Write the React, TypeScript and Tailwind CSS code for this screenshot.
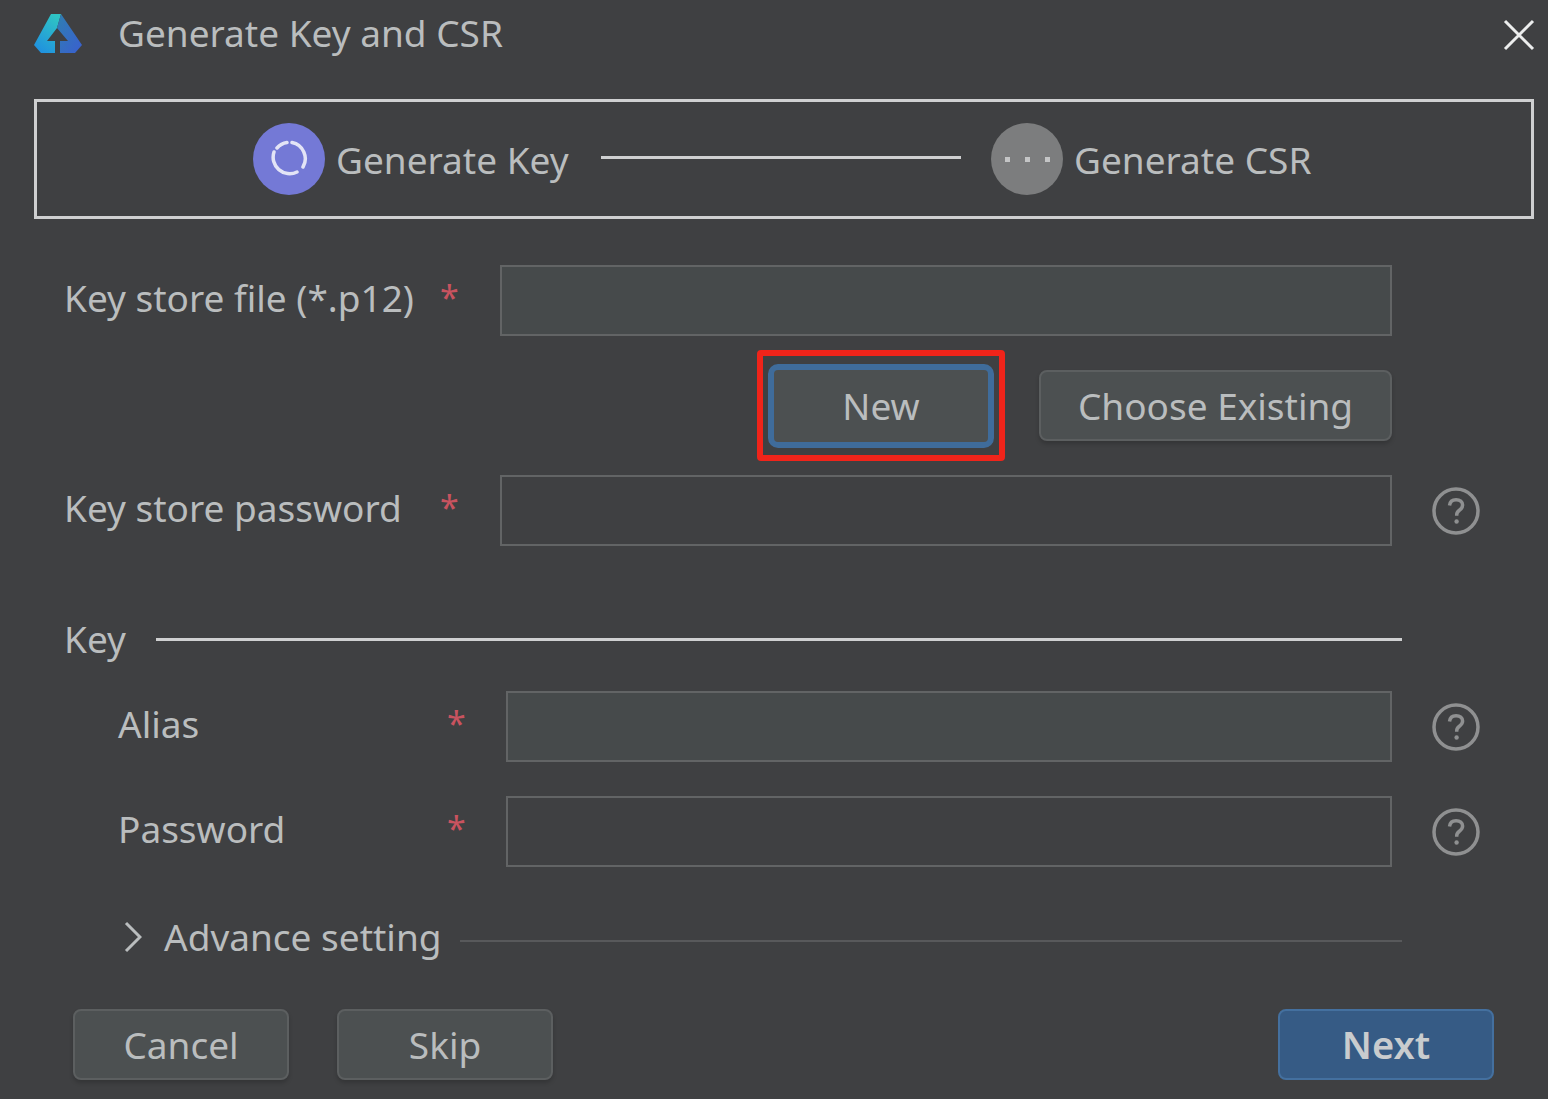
import React from 'react';

const font = "font-['Noto_Sans','Open_Sans',sans-serif]";

const Logo = () => (
  <svg width="50" height="41" viewBox="0 0 50 41" className="block">
    <defs>
      <linearGradient id="logoLeft" x1="0.2" y1="1" x2="0.7" y2="0">
        <stop offset="0" stopColor="#1f8fe0" />
        <stop offset="1" stopColor="#2fc4c4" />
      </linearGradient>
      <linearGradient id="logoRight" x1="0" y1="0" x2="1" y2="1">
        <stop offset="0" stopColor="#2f7fb0" />
        <stop offset="1" stopColor="#3a5fd0" />
      </linearGradient>
    </defs>
    <path d="M18 1 H28 L24 15 L14 28 H22 V40 H8 L1 32 Z" fill="url(#logoLeft)" />
    <path d="M28 1 L49 32 L42 40 H27 V28 H35 L24 15 Z" fill="url(#logoRight)" />
  </svg>
);

const HelpIcon = () => (
  <svg width="48" height="48" viewBox="0 0 48 48" fill="none" className="shrink-0">
    <circle cx="24" cy="24" r="22" stroke="#8f9091" strokeWidth="3.5" />
    <path d="M17.5 18.5c.4-3.6 3-5.8 6.6-5.8 3.8 0 6.5 2.2 6.5 5.4 0 2.4-1.2 3.7-3.2 5.1-1.9 1.3-2.7 2.4-2.7 4.6v1" stroke="#8f9091" strokeWidth="3.5" />
    <circle cx="24.6" cy="34.5" r="2.2" fill="#8f9091" />
  </svg>
);

const Required = () => (
  <span className="block h-[34px] text-[34px] leading-none text-[#c9535f]">*</span>
);

const Field = ({ filled }: { filled?: boolean }) => (
  <div className={`h-[71px] flex-1 border-2 border-[#626465] ${filled ? 'bg-[#464a4b]' : 'bg-[#3f4042]'}`} />
);

const Button = ({ label, className }: { label: string; className: string }) => (
  <button className={`flex h-[71px] items-center justify-center rounded-[8px] border-2 border-[#5c5f60] bg-[#4c5051] text-[#babdbe] shadow-[0_3px_4px_rgba(0,0,0,0.18)] ${className}`}>
    {label}
  </button>
);

const Row = ({ label, labelWidth, starWidth, filled, help }: { label: string; labelWidth: string; starWidth: string; filled?: boolean; help?: boolean }) => (
  <div className="flex items-center">
    <label className={`pb-[5px] ${labelWidth}`}>{label}</label>
    <div className={`self-start pt-[15px] ${starWidth}`}><Required /></div>
    <Field filled={filled} />
    <div className="flex w-[88px] justify-end">{help && <HelpIcon />}</div>
  </div>
);

export default function App() {
  return (
    <div className={`flex h-[1099px] w-[1548px] flex-col overflow-hidden bg-[#3f4042] text-[37px] text-[#babdbe] ${font}`}>
      {/* Title bar */}
      <header className="flex h-[99px] items-start pl-[33px] pr-[13px] pt-[13px]">
        <Logo />
        <h1 className="ml-[35px] mt-[-2px] text-[37px] font-normal leading-[44px]">Generate Key and CSR</h1>
        <svg width="32" height="32" viewBox="0 0 32 32" fill="none" className="ml-auto mt-[6px]">
          <path d="M2 2 30 30M30 2 2 30" stroke="#eceded" strokeWidth="3" />
        </svg>
      </header>

      {/* Steps */}
      <div className="ml-[34px] flex h-[120px] w-[1500px] items-center border-[3px] border-[#cfd0d1] pl-[216px]">
        <div className="flex size-[72px] items-center justify-center rounded-full bg-[#7479d6]">
          <svg width="38" height="38" viewBox="0 0 38 38" fill="none">
            <path d="M22 2.5A16.5 16.5 0 0 1 33 27M27 32A16.5 16.5 0 0 1 4 12M7 8A16.5 16.5 0 0 1 17 2.5" stroke="#e3e4f6" strokeWidth="3.5" strokeLinecap="round" />
          </svg>
        </div>
        <span className="ml-[11px] w-[265px] leading-none">Generate Key</span>
        <div className="mt-[-4px] h-[3px] w-[360px] bg-[#cfd0d1]" />
        <div className="ml-[30px] flex size-[72px] items-center justify-center gap-[15px] rounded-full bg-[#7c7d7e]">
          <i className="size-[5px] bg-[#c4c5c6]" />
          <i className="size-[5px] bg-[#c4c5c6]" />
          <i className="size-[5px] bg-[#c4c5c6]" />
        </div>
        <span className="ml-[11px] leading-none">Generate CSR</span>
      </div>

      {/* Key store */}
      <section className="mt-[46px] flex flex-col pl-[64px] pr-[68px]">
        <Row label="Key store file (*.p12)" labelWidth="w-[376px]" starWidth="w-[60px]" filled />

        <div className="mb-[14px] mr-[88px] mt-[14px] flex h-[111px] items-center justify-end">
          <div className="flex h-[111px] w-[248px] items-center justify-center rounded-[4px] border-[6px] border-[#f0241a]">
            <button className="flex h-[84px] w-[226px] items-center justify-center rounded-[10px] border-[6px] border-[#3f6c9b] bg-[#4c5051] text-[#babdbe]">New</button>
          </div>
          <Button label="Choose Existing" className="ml-[34px] w-[353px]" />
        </div>

        <Row label="Key store password" labelWidth="w-[376px]" starWidth="w-[60px]" help />
      </section>

      {/* Key */}
      <section className="mt-[70px] flex flex-col pl-[64px] pr-[68px]">
        <div className="mr-[78px] flex h-[46px] items-center">
          <span className="pb-[1px]">Key</span>
          <div className="ml-[30px] h-[3px] flex-1 bg-[#cfd0d1]" />
        </div>
        <div className="mt-[29px] flex flex-col gap-[34px] pl-[54px]">
          <Row label="Alias" labelWidth="w-[329px]" starWidth="w-[59px]" filled help />
          <Row label="Password" labelWidth="w-[329px]" starWidth="w-[59px]" help />
        </div>
      </section>

      {/* Advance setting */}
      <div className="mt-[46px] flex h-[48px] items-center pl-[124px] pr-[146px]">
        <svg width="18" height="32" viewBox="0 0 18 32" fill="none" className="shrink-0">
          <path d="M2 2 16 16 2 30" stroke="#babdbe" strokeWidth="3" />
        </svg>
        <span className="ml-[22px]">Advance setting</span>
        <div className="ml-[18px] mt-[8px] h-[2px] flex-1 bg-[#58595b]" />
      </div>

      {/* Footer */}
      <footer className="mt-[48px] flex pl-[73px] pr-[54px]">
        <Button label="Cancel" className="w-[216px]" />
        <Button label="Skip" className="ml-[48px] w-[216px]" />
        <button className="ml-auto flex h-[71px] w-[216px] items-center justify-center rounded-[8px] border-2 border-[#44709f] bg-[#365b85] text-[38px] font-semibold text-[#c9ccce]">Next</button>
      </footer>
    </div>
  );
}
